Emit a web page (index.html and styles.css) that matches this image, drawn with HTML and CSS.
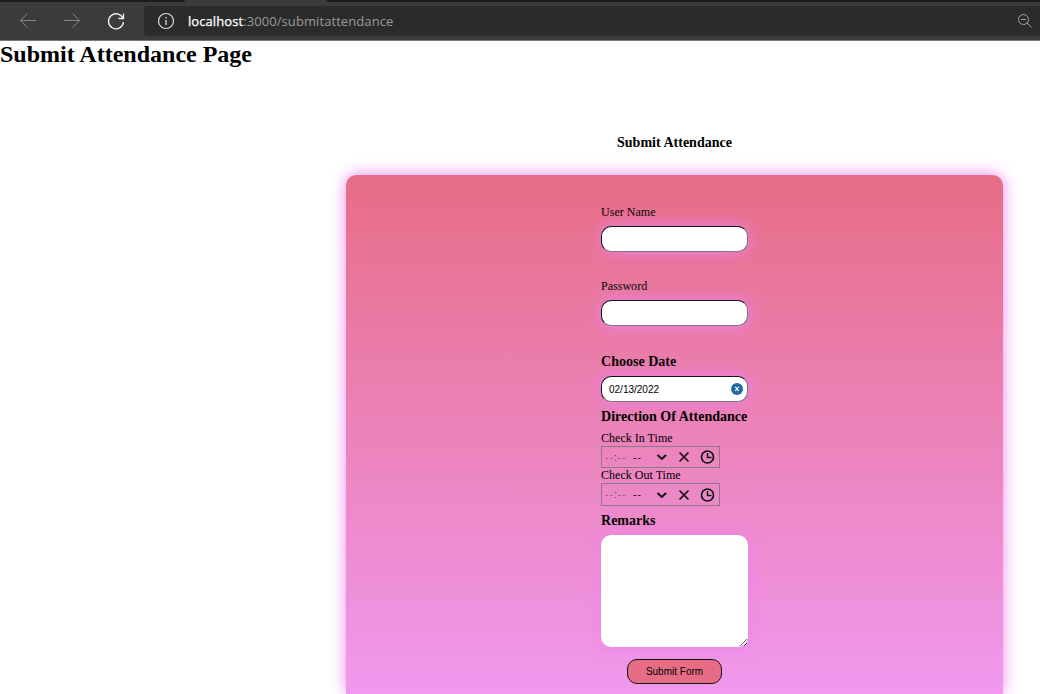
FILE: index.html
```
<!DOCTYPE html>
<html lang="en">
<head>
<meta charset="utf-8">
<title>Submit Attendance</title>
<link rel="stylesheet" href="styles.css">
</head>
<body>
<header class="browser">
  <div class="tabs"><span class="tab-left"></span><span class="tab-right"></span></div>
  <nav class="toolbar">
    <svg class="nav-icons" width="144" height="32" viewBox="0 0 144 32" fill="none">
      <path d="M36 14.500H20.500M27.500 7.500l-7 7 7 7M64 14.500h15.500M72.500 7.500l7 7-7 7" stroke="#858585"/>
      <path d="M123 12.500A7.500 7.500 0 1 0 123.500 16M123.500 7.500v5H118.500" stroke="#f2f2f2" stroke-width="1.300"/>
    </svg>
    <div class="address">
      <svg class="info" width="18" height="18" viewBox="0 0 18 18" fill="none" stroke="#dedede"><circle cx="9" cy="9" r="7.500" stroke-width="1.200"/><path d="M9 8v5M9 5v1.500" stroke-width="1.300"/></svg>
      <span class="url"><b>localhost</b>:3000/submitattendance</span>
      <svg class="zoom" width="16" height="16" viewBox="0 0 16 16" fill="none" stroke="#a2a2a2"><circle cx="6.500" cy="6.500" r="5"/><path d="M4 6.500h5M10 10l4.500 4.500"/></svg>
    </div>
  </nav>
</header>
<main class="page">
  <h1 class="page-title">Submit Attendance Page</h1>
  <section class="attendance">
    <h2 class="form-title">Submit Attendance</h2>
    <form class="card">
      <div class="fields">
        <label class="label" for="user">User Name</label>
        <input class="input" id="user" type="text">
        <label class="label spaced" for="pass">Password</label>
        <input class="input" id="pass" type="password">
        <h3 class="heading date-heading">Choose Date</h3>
        <div class="input date"><span>02/13/2022</span>
          <svg width="12" height="12" viewBox="0 0 12 12"><circle cx="6" cy="6" r="6" fill="#216ba5"/><path d="M4.300 3.800l3.400 4M7.700 3.800L4.300 7.800" stroke="#fff" stroke-width="1.200"/></svg>
        </div>
        <h3 class="heading direction">Direction Of Attendance</h3>
        <span class="label time-label">Check In Time</span>
        <div class="time"><span class="digits">--<i>:</i>--</span><span class="period">--</span>
          <svg width="60" height="16" viewBox="0 0 60 16" fill="none" stroke="#101010"><path d="M1.500 6l4.300 4 4.300-4" stroke-width="2"/><path d="M23.500 3.500l9 9M32.500 3.500l-9 9" stroke-width="1.700"/><circle cx="51.500" cy="8" r="6" stroke-width="1.700"/><path d="M51.500 4v4.500h4" stroke-width="1.500"/></svg>
        </div>
        <span class="label out-label">Check Out Time</span>
        <div class="time out"><span class="digits">--<i>:</i>--</span><span class="period">--</span>
          <svg width="60" height="16" viewBox="0 0 60 16" fill="none" stroke="#101010"><path d="M1.500 6l4.300 4 4.300-4" stroke-width="2"/><path d="M23.500 3.500l9 9M32.500 3.500l-9 9" stroke-width="1.700"/><circle cx="51.500" cy="8" r="6" stroke-width="1.700"/><path d="M51.500 4v4.500h4" stroke-width="1.500"/></svg>
        </div>
        <h3 class="heading remarks-heading">Remarks</h3>
        <textarea class="remarks"></textarea>
        <button class="submit" type="button">Submit Form</button>
      </div>
    </form>
  </section>
</main>
</body>
</html>
```
FILE: styles.css
```
* { box-sizing: border-box; }
body { margin: 0; height: 694px; overflow: hidden; background: #fff; color: #000; font-family: "Liberation Serif", serif; }
h1, h2, h3 { margin: 0; font-weight: bold; white-space: nowrap; }
.browser { height: 41px; background: #3b3b3b; border-bottom: 1px solid #777; }
.tabs { height: 2px; display: flex; justify-content: space-between; }
.tab-left { width: 185px; background: #1c1c1c; border-radius: 0 0 3px 0; }
.tab-right { width: 714px; background: #1c1c1c; border-radius: 0 0 0 3px; }
.toolbar { display: flex; padding-top: 4px; }
.nav-icons { flex: none; }
.address { display: flex; align-items: center; flex: 1; height: 30px; padding: 0 7px 0 13px; background: #2b2b2b; border-radius: 4px 0 0 4px; }
.url { margin-left: 13px; font: 13px/18px "Open Sans", "Noto Sans", sans-serif; letter-spacing: 0.08px; color: #9a9a9a; }
.url b { font-weight: 400; color: #fff; -webkit-text-stroke: 0.250px #fff; }
.zoom { margin-left: auto; }
.page { height: 653px; display: flow-root; overflow: hidden; }
.page-title { font-size: 24px; line-height: 27px; }
.attendance { width: 657px; margin: 66px 0 0 346px; }
.form-title { height: 17px; font-size: 14.040px; line-height: 17px; text-align: center; }
.card { height: 519px; margin-top: 24px; padding-top: 28px; border-radius: 10px 10px 0 0; background: linear-gradient(#e76d86, #f099ee); box-shadow: 0 0 16px violet; }
.fields { width: 147px; margin: 0 auto; display: flex; flex-direction: column; }
.label { height: 18px; font-size: 12.050px; line-height: 18px; white-space: nowrap; }
.input { width: 147px; height: 26px; margin-top: 5px; padding: 0 6px; border: 1px solid; border-color: #111 #777 #777 #111; border-radius: 10px; background: #fff; box-shadow: 0 0 16px violet; outline: 0; }
.spaced { margin-top: 25px; }
.heading { height: 18px; font-size: 14.040px; line-height: 18px; }
.date-heading { margin-top: 26px; }
.date { margin-top: 6px; padding: 0 4px 0 7px; display: flex; align-items: center; justify-content: space-between; font: 10px "Liberation Sans", sans-serif; }
.direction { margin-top: 5px; }
.time-label { margin-top: 4px; height: 17px; }
.time { width: 119px; height: 22px; border: 1px solid #8b7889; display: flex; align-items: center; padding-left: 3px; font: 10px "Liberation Sans", sans-serif; }
.digits { width: 28px; color: #8b6076; letter-spacing: 1.100px; white-space: nowrap; }
.digits i { color: #333; font-style: normal; }
.period { width: 23px; letter-spacing: 1.200px; }
.out-label { height: 15px; line-height: 15px; }
.out { height: 23px; }
.remarks-heading { margin-top: 5px; }
.remarks { width: 147px; height: 112px; margin-top: 6px; border: 0; border-radius: 10px; background: #fff; box-shadow: 0 0 16px violet; resize: both; }
.submit { width: 95px; height: 25px; margin: 12px auto 0; padding: 0; border: 1px solid #111; border-radius: 10px; background: #e76d86; color: #000; font: 10px "Liberation Sans", sans-serif; }
```
